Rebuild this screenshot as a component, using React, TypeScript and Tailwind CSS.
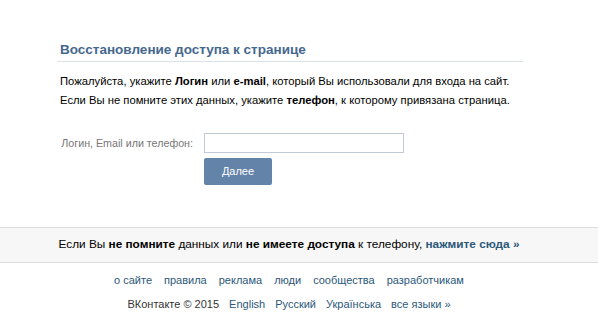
const footerLinks = ["о сайте", "правила", "реклама", "люди", "сообщества", "разработчикам"];
const langs = ["English", "Русский", "Українська", "все языки »"];

export default function App() {
  return (
    <div className="w-[598px] h-[334px] bg-white text-[11px] text-black overflow-hidden font-['Liberation_Sans',Arial,sans-serif]">
      <div className="w-[578px] pt-[42px]">
        <div className="ml-[57px] w-[466px]">
          <h1 className="pl-[3px] pb-[3px] border-b border-[#dae1e8] text-[13.5px] leading-[16px] font-bold text-[#45688e]">
            Восстановление доступа к странице
          </h1>
          <div className="pl-[3px] mt-[10px] leading-[19px] text-[11.25px]">
            <p>
              Пожалуйста, укажите <b>Логин</b> или <b>e-mail</b>, который Вы использовали для входа на сайт.
            </p>
            <p>
              Если Вы не помните этих данных, укажите <b>телефон</b>, к которому привязана страница.
            </p>
          </div>
        </div>

        <div className="mt-[23px] flex items-center">
          <label className="w-[193px] text-right text-[10.7px] text-[#777]">Логин, Email или телефон:</label>
          <input
            type="text"
            className="ml-[11px] w-[200px] h-[20px] border border-[#c0cad5] bg-white px-[3px] outline-none"
          />
        </div>
        <div className="mt-[5px] ml-[204px]">
          <button className="w-[68px] h-[27px] rounded-[2px] bg-[#6383a8] text-white text-[11px]">
            Далее
          </button>
        </div>
      </div>

      <div className="mt-[42px] w-[598px] h-[36px] border-t border-b border-[#dcdcdc] bg-[#f7f7f7] flex items-center">
        <p className="w-[578px] text-center text-[11.8px]">
          Если Вы <b>не помните</b> данных или <b>не имеете доступа</b> к телефону,{" "}
          <a className="font-bold text-[#2b587a]">нажмите сюда »</a>
        </p>
      </div>

      <div className="w-[578px] mt-[10px] flex justify-center gap-[12px] text-[#2b587a] leading-[14px]">
        {footerLinks.map((l) => (
          <a key={l}>{l}</a>
        ))}
      </div>
      <div className="w-[578px] mt-[10px] flex justify-center gap-[10px] leading-[14px]">
        <span className="text-[#333]">ВКонтакте © 2015</span>
        {langs.map((l) => (
          <a key={l} className="text-[#2b587a]">
            {l}
          </a>
        ))}
      </div>
    </div>
  );
}
